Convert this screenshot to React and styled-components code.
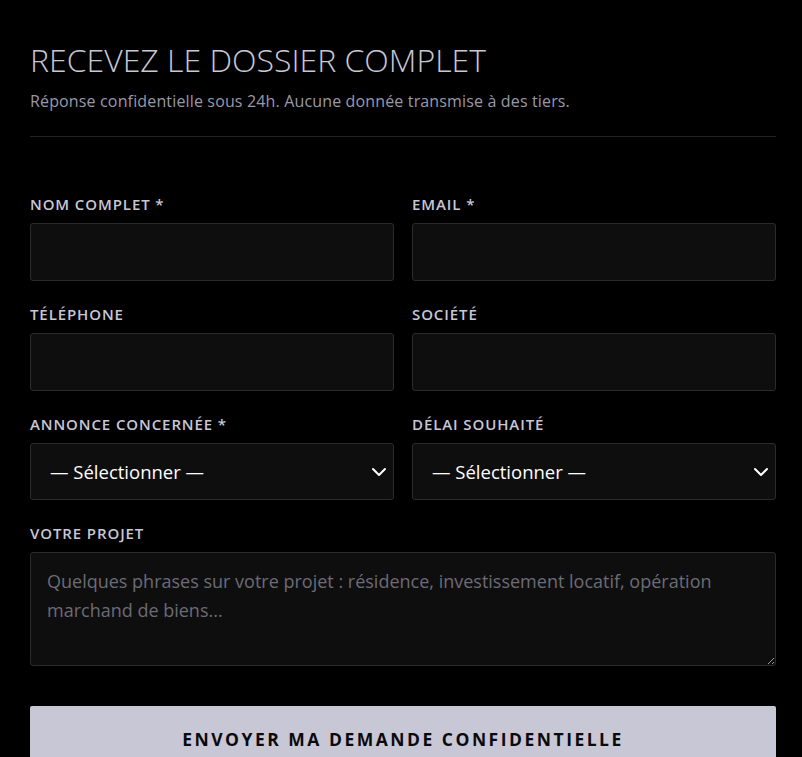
import React from "react";
import styled, { createGlobalStyle } from "styled-components";

const GlobalStyle = createGlobalStyle`
  html, body {
    margin: 0;
    padding: 0;
    background: #000000;
    color-scheme: dark;
  }
  body {
    font-family: "Open Sans", "Liberation Sans", sans-serif;
    color: #c8c7d6;
  }
  * {
    box-sizing: border-box;
  }
`

const Page = styled.div`
  padding: 41px 26px 0 30px;
  min-height: 757px;
  overflow: hidden;
`

const Header = styled.header`
  padding-bottom: 24px;
  border-bottom: 1px solid #232326;
`

const Title = styled.h2`
  margin: 0;
  font-size: 32px;
  font-weight: 300;
  line-height: 38px;
  color: #c8c7d6;
`

const Subtitle = styled.p`
  margin: 11px 0 0;
  font-size: 16px;
  line-height: 22px;
  letter-spacing: 0.15px;
  color: #9a99aa;
`

const Form = styled.form`
  display: grid;
  grid-template-columns: 1fr 1fr;
  column-gap: 18px;
  row-gap: 26px;
  padding-top: 60px;
`

const Field = styled.div`
  display: flex;
  flex-direction: column;
  gap: 11px;
  grid-column: ${(p) => (p.$wide ? "1 / -1" : "auto")};
`

const Label = styled.label`
  font-size: 15px;
  font-weight: 600;
  letter-spacing: 0.9px;
  line-height: 15px;
  color: #c8c7d6;
  text-transform: uppercase;
`

const Input = styled.input`
  height: 58px;
  padding: 0 16px;
  background: #0e0e0f;
  border: 1px solid #2b2b2e;
  border-radius: 3px;
  color: #ffffff;
  font: inherit;
  font-size: 18px;
  outline: none;
`

const SelectWrap = styled.div`
  position: relative;
`

const Select = styled.select`
  width: 100%;
  height: 57px;
  padding: 0 40px 0 19px;
  background: #0e0e0f;
  border: 1px solid #2b2b2e;
  border-radius: 3px;
  color: #ffffff;
  font: inherit;
  font-size: 18.5px;
  appearance: none;
  outline: none;
`

const Chevron = styled.svg`
  position: absolute;
  right: 7px;
  top: 50%;
  transform: translateY(-50%);
  pointer-events: none;
`

const TextArea = styled.textarea`
  height: 114px;
  padding: 14px 16px;
  background: #0e0e0f;
  border: 1px solid #2b2b2e;
  border-radius: 3px;
  color: #ffffff;
  font: inherit;
  font-size: 18px;
  line-height: 29px;
  resize: vertical;
  outline: none;

  &::placeholder {
    color: #6c6b76;
  }
`

const Submit = styled.button`
  grid-column: 1 / -1;
  margin-top: 14px;
  height: 68px;
  border: none;
  border-radius: 2px;
  background: #c8c7d6;
  color: #0a0a0c;
  font-family: "Open Sans", "Liberation Sans", sans-serif;
  font-size: 17.5px;
  font-weight: 700;
  letter-spacing: 2.5px;
  text-transform: uppercase;
  padding-bottom: 4px;
`

const SelectField = ({ label }) => (
  <Field>
    <Label>{label}</Label>
    <SelectWrap>
      <Select defaultValue="">
        <option value="">— Sélectionner —</option>
      </Select>
      <Chevron width="16" height="10" viewBox="0 0 16 10">
        <path d="M2 2 L8 8 L14 2" fill="none" stroke="#ffffff" strokeWidth="2" strokeLinecap="round" strokeLinejoin="round" />
      </Chevron>
    </SelectWrap>
  </Field>
)

const App = () => {
  return (
    <Page>
      <GlobalStyle />
      <Header>
        <Title>RECEVEZ LE DOSSIER COMPLET</Title>
        <Subtitle>Réponse confidentielle sous 24h. Aucune donnée transmise à des tiers.</Subtitle>
      </Header>
      <Form onSubmit={(e) => e.preventDefault()}>
        <Field>
          <Label>Nom complet *</Label>
          <Input type="text" />
        </Field>
        <Field>
          <Label>Email *</Label>
          <Input type="email" />
        </Field>
        <Field>
          <Label>Téléphone</Label>
          <Input type="tel" />
        </Field>
        <Field>
          <Label>Société</Label>
          <Input type="text" />
        </Field>
        <SelectField label="Annonce concernée *" />
        <SelectField label="Délai souhaité" />
        <Field $wide>
          <Label>Votre projet</Label>
          <TextArea placeholder="Quelques phrases sur votre projet : résidence, investissement locatif, opération marchand de biens..." />
        </Field>
        <Submit type="submit">Envoyer ma demande confidentielle</Submit>
      </Form>
    </Page>
  );
}

export default App;
